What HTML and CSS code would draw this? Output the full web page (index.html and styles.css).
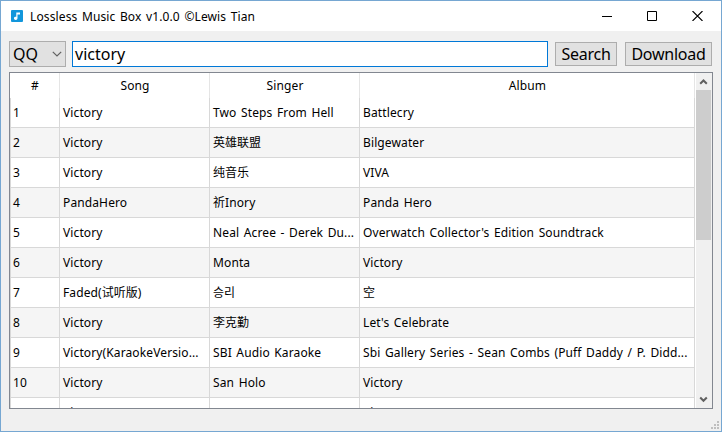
FILE: index.html
```
<!DOCTYPE html>
<html lang="en">
<head>
<meta charset="utf-8">
<title>Lossless Music Box</title>
<link rel="stylesheet" href="styles.css">
</head>
<body>
<div class="window">
  <header class="titlebar">
    <svg class="logo" width="12" height="12" viewBox="0 0 12 12"><rect width="12" height="12" rx="1" fill="#1296db"/><path d="M5 2.5h4v2H6.5v3.8a1.8 1.6 0 1 1-1.2-1.5V2.5z" fill="#fff"/></svg>
    <h1 class="title">Lossless Music Box v1.0.0 ©Lewis Tian</h1>
    <div class="controls">
      <svg width="10" height="10" viewBox="0 0 10 10"><path d="M0 5.5h10" stroke="#000"/></svg>
      <svg width="10" height="10" viewBox="0 0 10 10"><path d="M.5.5h9v9h-9z" fill="none" stroke="#000"/></svg>
      <svg width="11" height="10" viewBox="0 0 11 10"><path d="M.5 0l10 10M10.5 0L.5 10" stroke="#000" stroke-width="1.1"/></svg>
    </div>
  </header>
  <div class="toolbar">
    <div class="combo"><span>QQ</span><svg width="10" height="6" viewBox="0 0 10 6"><path d="M.8.8L5 5 9.2.8" fill="none" stroke="#606060" stroke-width="1.2"/></svg></div>
    <div class="search-field">victory</div>
    <div class="button search"><span>Search</span></div>
    <div class="button download"><span>Download</span></div>
  </div>
  <div class="table">
    <div class="grid">
      <div class="row head"><span>#</span><span>Song</span><span>Singer</span><span>Album</span></div>
      <div class="row"><span>1</span><span>Victory</span><span>Two Steps From Hell</span><span>Battlecry</span></div>
      <div class="row alt"><span>2</span><span>Victory</span><span><span class="cjk">英雄联盟</span></span><span>Bilgewater</span></div>
      <div class="row"><span>3</span><span>Victory</span><span><span class="cjk">纯音乐</span></span><span>VIVA</span></div>
      <div class="row alt"><span>4</span><span>PandaHero</span><span><span class="cjk">祈</span>Inory</span><span>Panda Hero</span></div>
      <div class="row"><span>5</span><span>Victory</span><span>Neal Acree - Derek Du...</span><span>Overwatch Collector's Edition Soundtrack</span></div>
      <div class="row alt"><span>6</span><span>Victory</span><span>Monta</span><span>Victory</span></div>
      <div class="row"><span>7</span><span>Faded(<span class="cjk">试听版</span>)</span><span><span class="cjk korean">승리</span></span><span><span class="cjk">空</span></span></div>
      <div class="row alt"><span>8</span><span>Victory</span><span><span class="cjk">李克勤</span></span><span>Let's Celebrate</span></div>
      <div class="row"><span>9</span><span>Victory(KaraokeVersio...</span><span>SBI Audio Karaoke</span><span>Sbi Gallery Series - Sean Combs (Puff Daddy / P. Didd...</span></div>
      <div class="row alt"><span>10</span><span>Victory</span><span>San Holo</span><span>Victory</span></div>
      <div class="row"><span></span><span>Victory</span><span></span><span>Victory</span></div>
    </div>
    <div class="scrollbar">
      <svg width="15" height="17" viewBox="0 0 15 17"><path d="M4.2 10.8l3.3-3.3 3.3 3.3" fill="none" stroke="#606060" stroke-width="2"/></svg>
      <div class="thumb"></div>
      <svg class="down" width="15" height="17" viewBox="0 0 15 17"><path d="M4.2 6.5l3.3 3.3 3.3-3.3" fill="none" stroke="#606060" stroke-width="2"/></svg>
    </div>
  </div>
  <svg class="grip" width="8" height="8" viewBox="0 0 8 8" fill="#bfbfbf"><path d="M6 0h2v2H6zM3 3h2v2H3zM6 3h2v2H6zM0 6h2v2H0zM3 6h2v2H3zM6 6h2v2H6z"/></svg>
</div>
</body>
</html>
```
FILE: styles.css
```
* { box-sizing: border-box; }
body {
  margin: 0;
  font-family: "Noto Sans", "Noto Sans CJK SC", sans-serif;
  font-size: 12px;
  letter-spacing: 0.12px;
  word-spacing: 1.3px;
  color: #000;
}
svg { display: block; flex: none; }
.window {
  width: 722px;
  height: 432px;
  border: 1px solid #76a7d2;
  background: #f0f0f0;
  position: relative;
  overflow: hidden;
}
.titlebar {
  height: 30px;
  background: #fff;
  display: flex;
  align-items: center;
  padding: 0 18px 0 10px;
}
.title {
  margin: 0 0 0 7px;
  font-size: 12px;
  font-weight: 400;
  white-space: nowrap;
}
.controls { margin-left: auto; display: flex; gap: 35px; }
.toolbar {
  height: 41px;
  padding: 10px 8px 0;
  display: flex;
  align-items: flex-start;
  font-size: 16px;
  line-height: 24px;
  letter-spacing: 0;
}
.combo {
  width: 57px;
  height: 26px;
  border: 1px solid #adadad;
  background: #e1e1e1;
  display: flex;
  align-items: center;
  justify-content: space-between;
  padding: 0 3px;
}
.search-field {
  width: 476px;
  height: 26px;
  margin-left: 6px;
  border: 1px solid #0078d7;
  background: #fff;
  padding-left: 2px;
}
.button {
  height: 24px;
  margin-top: 1px;
  border: 1px solid #adadad;
  background: #e1e1e1;
  display: flex;
  justify-content: center;
  line-height: 22px;
  letter-spacing: -0.25px;
}
.search { width: 62px; margin-left: 7px; }
.download { width: 87px; margin-left: 8px; }
.table {
  width: 704px;
  height: 337px;
  margin-left: 8px;
  border: 1px solid #828790;
  background: #fff;
  display: flex;
  overflow: hidden;
}
.grid { width: 685px; }
.row {
  height: 30px;
  display: grid;
  grid-template-columns: 50px 150px 150px 335px;
  line-height: 29px;
  border-bottom: 1px solid #d8d8d8;
  white-space: nowrap;
}
.row > span {
  height: 29px;
  border-right: 1px solid #d8d8d8;
  padding-left: 3px;
  overflow: hidden;
}
.row > span:first-child { border-left: 1px solid #d8d8d8; padding-left: 2px; }
.alt { background: #f5f5f5; }
.head { height: 25px; line-height: 25px; border: 0; text-align: center; }
.head > span, .head > span:first-child {
  height: 25px;
  padding: 0 0 0 1px;
  border-left: 0;
  border-right-color: #e5e5e5;
}
.cjk {
  display: inline-block;
  height: 29px;
  line-height: 27px;
  vertical-align: top;
  letter-spacing: 0;
  font-family: "Noto Sans CJK SC", sans-serif;
}
.korean { font-family: "Noto Sans CJK KR", sans-serif; }
.scrollbar {
  width: 16px;
  margin-left: 1px;
  border-right: 1px solid #f0f0f0;
  background: #f0f0f0;
  display: flex;
  flex-direction: column;
}
.thumb { height: 150px; background: #cdcdcd; }
.down { margin-top: auto; }
.grip { position: absolute; right: 2px; bottom: 2px; }
```
